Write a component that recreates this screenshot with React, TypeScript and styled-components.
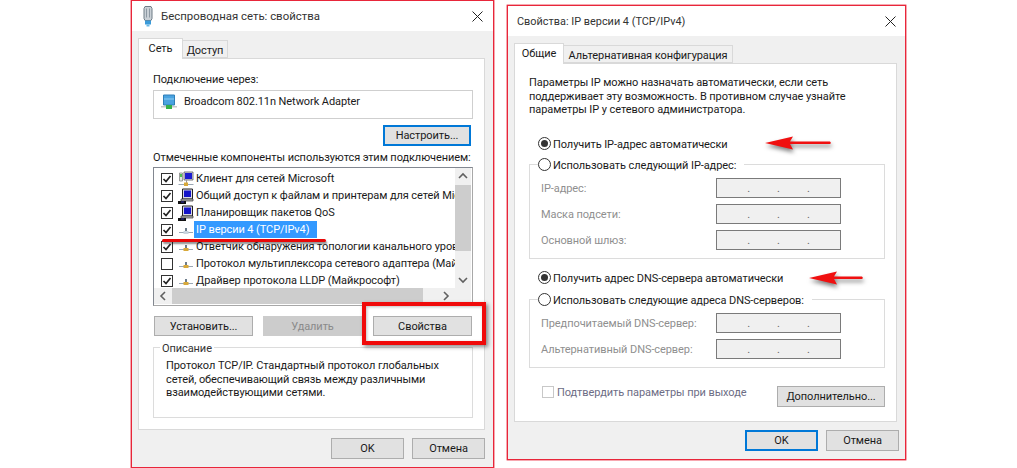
import React from "react";
import styled, { createGlobalStyle } from "styled-components";

const Global = createGlobalStyle`
  html, body { margin: 0; padding: 0; background: #fff; }
  body { font-family: Roboto, "Open Sans", "Liberation Sans", sans-serif; font-size: 11px; letter-spacing: -0.08px; color: #1a1a1a; }
  #root { width: 1017px; height: 468px; overflow: hidden; }
  * { box-sizing: border-box; }
`;

const Page = styled.div`
  position: relative;
  width: 1017px;
  height: 468px;
  display: flex;
  align-items: flex-start;
  padding-left: 131px;
  background: #fff;
  overflow: hidden;
`;

const Win = styled.section<{ $w: number; $h: number; $top: number; $left?: number }>`
  width: ${(p) => p.$w}px;
  height: ${(p) => p.$h}px;
  margin-top: ${(p) => p.$top}px;
  margin-left: ${(p) => p.$left ?? 0}px;
  display: flex;
  flex-direction: column;
  border: 1px solid #e8263a;
  box-shadow: 0 0 0 0.4px #e8263a;
  background: #f0f0f0;
`;

const TitleBar = styled.header<{ $pad: number; $right: number; $size: number }>`
  height: 30px;
  flex: none;
  display: flex;
  align-items: center;
  gap: 5px;
  padding: 0 ${(p) => p.$right}px 0 ${(p) => p.$pad}px;
  background: #fff;
  font-size: ${(p) => p.$size}px;
  letter-spacing: 0;
  color: #333;
  svg:last-child { margin-left: auto; }
`;

const Body = styled.div`
  flex: 1;
  display: flex;
  flex-direction: column;
  padding: 7px 8px 0 6px;
`;

const Tabs = styled.nav`
  height: 20px;
  flex: none;
  display: flex;
  align-items: flex-end;
  position: relative;
  z-index: 1;
`;

const Tab = styled.div<{ $active?: boolean; $w: number }>`
  width: ${(p) => p.$w}px;
  height: ${(p) => (p.$active ? 21 : 18)}px;
  margin-bottom: ${(p) => (p.$active ? -1 : 0)}px;
  display: flex;
  align-items: center;
  justify-content: center;
  white-space: nowrap;
  padding: ${(p) => (p.$active ? "0 0 1px" : "2px 0 0")};
  border: 1px solid #d9d9d9;
  border-bottom: ${(p) => (p.$active ? "none" : "1px solid #d9d9d9")};
  border-left: ${(p) => (p.$active ? "1px solid #d9d9d9" : "none")};
  background: ${(p) => (p.$active ? "#fff" : "#f0f0f0")};
`;

const TabPage = styled.div<{ $h: number; $pad: string }>`
  height: ${(p) => p.$h}px;
  flex: none;
  padding: ${(p) => p.$pad};
  display: flex;
  flex-direction: column;
  background: #fff;
  border: 1px solid #d9d9d9;
`;

const Footer = styled.footer<{ $top: number; $right: number }>`
  display: flex;
  justify-content: flex-end;
  gap: 8px;
  margin-top: ${(p) => p.$top}px;
  margin-right: ${(p) => p.$right}px;
`;

const Btn = styled.div<{ $w: number; $h?: number; $focus?: boolean; $disabled?: boolean; $top?: number; $left?: number }>`
  width: ${(p) => p.$w}px;
  height: ${(p) => p.$h ?? 21}px;
  flex: none;
  margin-top: ${(p) => p.$top ?? 0}px;
  margin-left: ${(p) => p.$left ?? 0}px;
  display: flex;
  align-items: center;
  justify-content: center;
  background: ${(p) => (p.$disabled ? "#cccccc" : "#e1e1e1")};
  color: ${(p) => (p.$disabled ? "#8a8a8a" : "#1a1a1a")};
  border: ${(p) => (p.$focus ? "2px solid #0078d7" : p.$disabled ? "1px solid #cccccc" : "1px solid #adadad")};
`;

const Caption = styled.div<{ $top?: number }>`
  height: 15px;
  line-height: 17px;
  margin-top: ${(p) => p.$top ?? 0}px;
  white-space: nowrap;
`;

const AdapterBox = styled.div`
  width: 320px;
  height: 29px;
  margin-top: 4px;
  display: flex;
  align-items: center;
  gap: 7px;
  padding: 0 0 6px 7px;
  border: 1px solid #cfcfcf;
`;

const RightAligned = styled.div`
  width: 318px;
  display: flex;
  justify-content: flex-end;
`;

const ListBox = styled.div`
  width: 320px;
  height: 139px;
  margin-top: 3px;
  display: grid;
  grid-template-columns: 301px 16px;
  grid-template-rows: 120px 16px;
  border: 1px solid #828790;
  border-right-color: #a8a8a8;
  border-bottom-color: #a8a8a8;
`;

const Rows = styled.ul`
  list-style: none;
  margin: 0;
  padding: 2px 0 0 7px;
  overflow: hidden;
  background: #fff;
`;

const Row = styled.li`
  height: 17px;
  display: flex;
  align-items: center;
  white-space: nowrap;
  svg.ico { width: 16px; height: 16px; margin-left: 5px; flex: none; }
`;

const RowText = styled.span<{ $sel?: boolean }>`
  height: 17px;
  line-height: 18px;
  padding: 0 8px 0 2px;
  background: ${(p) => (p.$sel ? "#3399ff" : "transparent")};
  color: ${(p) => (p.$sel ? "#fff" : "#1a1a1a")};
`;

const Box = styled.span<{ $dim?: boolean }>`
  width: 12px;
  height: 12px;
  flex: none;
  display: inline-flex;
  align-items: center;
  justify-content: center;
  background: #fff;
  border: 1px solid ${(p) => (p.$dim ? "#c8c8c8" : "#333")};
`;

const VTrack = styled.div`
  background: #f0f0f0;
  display: flex;
  flex-direction: column;
  justify-content: space-between;
  align-items: center;
`;

const HTrack = styled.div`
  background: #f0f0f0;
  display: flex;
  align-items: center;
`;

const Corner = styled.div`
  background: #f0f0f0;
`;

const VThumb = styled.div`
  width: 16px;
  height: 66px;
  background: #cdcdcd;
  margin-top: -20px;
`;

const HThumb = styled.div`
  width: 251px;
  height: 16px;
  background: #cdcdcd;
`;

const ArrowCell = styled.span<{ $end?: boolean }>`
  width: 18px;
  height: 16px;
  flex: none;
  display: flex;
  align-items: center;
  justify-content: center;
  margin-left: ${(p) => (p.$end ? "auto" : "0")};
`;

const ActionRow = styled.div`
  display: flex;
  margin-top: 10px;
  padding-left: 1px;
  gap: 10px;
`;

const Fieldset = styled.fieldset<{ $w: number; $h: number; $top: number }>`
  width: ${(p) => p.$w}px;
  height: ${(p) => p.$h}px;
  margin: ${(p) => p.$top}px 0 0;
  padding: 0;
  border: 1px solid #dcdcdc;
  min-width: 0;
`;

const Legend = styled.legend<{ $ml: number }>`
  margin-left: ${(p) => p.$ml}px;
  padding: 0 8px 0 0;
  height: 16px;
  display: flex;
  align-items: center;
  gap: 2px;
  line-height: 15px;
`;

const DescLegend = styled.legend`
  margin-left: 6px;
  padding: 0 2px;
  height: 15px;
  line-height: 17px;
  color: #333;
`;

const Desc = styled.p`
  margin: 4px 0 0 12px;
  line-height: 13.5px;
  color: #1a1a1a;
`;

const Intro = styled.p`
  margin: 0;
  line-height: 13.5px;
  white-space: nowrap;
`;

const Radio = styled.span<{ $on?: boolean }>`
  width: 13px;
  height: 13px;
  flex: none;
  border-radius: 50%;
  border: 1px solid #333;
  background: #fff;
  display: inline-flex;
  align-items: center;
  justify-content: center;
  &::after {
    content: "";
    width: 7px;
    height: 7px;
    border-radius: 50%;
    background: ${(p) => (p.$on ? "#333" : "transparent")};
  }
`;

const RadioRow = styled.div<{ $top: number }>`
  height: 16px;
  margin: ${(p) => p.$top}px 0 0 9px;
  display: flex;
  align-items: center;
  gap: 2px;
  white-space: nowrap;
`;

const RadioText = styled.span`
  padding-top: 2px;
`;

const FieldGrid = styled.div<{ $top: number }>`
  display: grid;
  grid-template-columns: 175px 125px;
  grid-auto-rows: 20px;
  row-gap: 6px;
  margin-top: ${(p) => p.$top}px;
  padding-left: 11px;
`;

const FieldLabel = styled.span`
  display: flex;
  align-items: center;
  padding-top: 2px;
  color: #8f8f8f;
  white-space: nowrap;
`;

const IpField = styled.span`
  display: flex;
  align-items: flex-end;
  justify-content: center;
  gap: 27px;
  padding-bottom: 1px;
  border: 1px solid #7a7a7a;
  background: #f0f0f0;
  color: #666;
  line-height: 14px;
`;

const ConfirmRow = styled.div`
  display: flex;
  align-items: flex-start;
  margin-top: 18px;
`;

const ConfirmLabel = styled.label`
  display: flex;
  align-items: center;
  gap: 3px;
  height: 13px;
  margin-left: 13px;
  width: 235px;
  color: #6d6d85;
  white-space: nowrap;
`;

const RedFrame = styled.div`
  position: absolute;
  left: 362px;
  top: 302px;
  width: 124px;
  height: 43px;
  border: 4px solid #f00a0a;
  box-shadow: 2px 2px 4px rgba(0, 0, 0, 0.45), inset 1px 1px 3px rgba(0, 0, 0, 0.25);
`;

const RedLine = styled.div`
  position: absolute;
  left: 162px;
  top: 239px;
  width: 164px;
  height: 3px;
  border-radius: 2px;
  background: #e80808;
  box-shadow: 1px 2px 2px rgba(0, 0, 0, 0.45);
`;

const ArrowMark = styled.svg<{ $x: number; $y: number }>`
  position: absolute;
  left: ${(p) => p.$x}px;
  top: ${(p) => p.$y}px;
  overflow: visible;
  filter: drop-shadow(1px 3px 2px rgba(0, 0, 0, 0.5));
`;

const Close = () => (
  <svg width="11" height="11" viewBox="0 0 11 11">
    <path d="M0.5 0.5 10.5 10.5M10.5 0.5 0.5 10.5" stroke="#222" strokeWidth="1" fill="none" />
  </svg>
);

const Check = () => (
  <svg width="10" height="10" viewBox="0 0 10 10">
    <path d="M1.5 5 4 7.5 8.5 2" stroke="#222" strokeWidth="1.7" fill="none" />
  </svg>
);

const WifiIcon = () => (
  <svg width="16" height="22" viewBox="0 0 16 22">
    <path d="M5 1.500h6l1 2v10l-1 2H5l-1-2v-10z" fill="#c9d0d6" stroke="#6f7c86" />
    <path d="M6.500 3.500v9M9.500 3.500v9" stroke="#8d99a3" />
    <path d="M5 15.500h6v4H5z" fill="#3a9ad9" />
    <path d="M6.500 19.500h3v2h-3z" fill="#66b6e6" />
  </svg>
);

const AdapterIcon = () => (
  <svg width="16" height="16" viewBox="0 0 16 16" style={{ flex: "none" }}>
    <path d="M2.500 1h11v10h-11z" fill="#4aa3e0" stroke="#2f7fb8" />
    <path d="M3 5h10" stroke="#8fcdf2" />
    <path d="M0 12h16v1.500H0z" fill="#c9c9c9" />
    <path d="M5 11h6v4H5z" fill="#35b04a" />
  </svg>
);

const PcIcon = () => (
  <svg className="ico" viewBox="0 0 16 16">
    <path d="M4.500 1h10v10h-10z" fill="#d8d8e4" stroke="#222" />
    <path d="M6 2.500h7v6.500H6z" fill="#1414c8" />
    <path d="M3 11h12v2H3z" fill="#b5b5b5" stroke="#333" strokeWidth=".7" />
    <path d="M0 13h8v3H0z" fill="#111" />
    <path d="M3 14h3" stroke="#33a" />
  </svg>
);

const ClientIcon = () => (
  <svg className="ico" viewBox="0 0 16 16">
    <path d="M1.500 2h3v8h-3z" fill="#dfe7df" stroke="#777" strokeWidth=".7" />
    <path d="M2 3h2v3H2z" fill="#4fc04f" />
    <path d="M6 1h9v8H6z" fill="#dde" stroke="#444" strokeWidth=".7" />
    <path d="M7 2h7v6H7z" fill="#1c1cd0" />
    <path d="M8 9h1v3H8z" fill="#999" />
    <path d="M0.500 13.500h15" stroke="#9aa7b4" />
    <path d="M6 11.500h4v3.500H6z" fill="#d8a93a" />
  </svg>
);

const ProtoIcon = ({ blue }: { blue?: boolean }) => (
  <svg className="ico" viewBox="0 0 16 16">
    <path d="M1 10.500h14" stroke="#9aa7b4" />
    <path d="M7 6h2v3H7z" fill="#6e7d8c" />
    <path d="M5.500 9h5v3h-5z" fill={blue ? "#c9d4de" : "#d8a93a"} />
  </svg>
);

const Chevron = ({ d }: { d: string }) => (
  <svg width="10" height="10" viewBox="0 0 10 10">
    <path d={d} stroke="#606060" strokeWidth="1.6" fill="none" />
  </svg>
);

const RedArrow = ({ x, y, w }: { x: number; y: number; w: number }) => (
  <ArrowMark $x={x} $y={y} width={w} height="14" viewBox={`0 0 ${w} 14`}>
    <path d={`M0 7 28 0.500 25 5.500 ${w - 1} 5.500 ${w} 7 ${w - 1} 8 25 8 28 13.500z`} fill="#f01010" />
  </ArrowMark>
);

const IpDots = () => (
  <IpField>
    <span>.</span>
    <span>.</span>
    <span>.</span>
  </IpField>
);

const rows: { text: string; on: boolean; icon: React.ReactNode; sel?: boolean }[] = [
  { text: "Клиент для сетей Microsoft", on: true, icon: <ClientIcon /> },
  { text: "Общий доступ к файлам и принтерам для сетей Microsoft", on: true, icon: <PcIcon /> },
  { text: "Планировщик пакетов QoS", on: true, icon: <PcIcon /> },
  { text: "IP версии 4 (TCP/IPv4)", on: true, icon: <ProtoIcon blue />, sel: true },
  { text: "Ответчик обнаружения топологии канального уровня", on: true, icon: <ProtoIcon /> },
  { text: "Протокол мультиплексора сетевого адаптера (Майкрософт)", on: false, icon: <ProtoIcon /> },
  { text: "Драйвер протокола LLDP (Майкрософт)", on: true, icon: <ProtoIcon /> },
];

export default function App() {
  return (
    <Page>
      <Global />
      <Win $w={363} $h={468} $top={0}>
        <TitleBar $pad={8} $right={10} $size={11.4}>
          <WifiIcon />
          <span>Беспроводная сеть: свойства</span>
          <Close />
        </TitleBar>
        <Body>
          <Tabs>
            <Tab $active $w={45}>Сеть</Tab>
            <Tab $w={45}>Доступ</Tab>
          </Tabs>
          <TabPage $h={372} $pad="12px 11px 0 14px">
            <Caption>Подключение через:</Caption>
            <AdapterBox>
              <AdapterIcon />
              <span>Broadcom 802.11n Network Adapter</span>
            </AdapterBox>
            <RightAligned>
              <Btn $w={88} $top={6} $focus>Настроить...</Btn>
            </RightAligned>
            <Caption $top={3}>Отмеченные компоненты используются этим подключением:</Caption>
            <ListBox>
              <Rows>
                {rows.map((r) => (
                  <Row key={r.text}>
                    <Box>{r.on && <Check />}</Box>
                    {r.icon}
                    <RowText $sel={r.sel}>{r.text}</RowText>
                  </Row>
                ))}
              </Rows>
              <VTrack>
                <ArrowCell><Chevron d="M1 7 5 3 9 7" /></ArrowCell>
                <VThumb />
                <ArrowCell><Chevron d="M1 3 5 7 9 3" /></ArrowCell>
              </VTrack>
              <HTrack>
                <ArrowCell><Chevron d="M7 1 3 5 7 9" /></ArrowCell>
                <HThumb />
                <ArrowCell $end><Chevron d="M3 1 7 5 3 9" /></ArrowCell>
              </HTrack>
              <Corner />
            </ListBox>
            <ActionRow>
              <Btn $w={99} $h={20}>Установить...</Btn>
              <Btn $w={99} $h={20} $disabled>Удалить</Btn>
              <Btn $w={99} $h={20} $left={1}>Свойства</Btn>
            </ActionRow>
            <Fieldset $w={320} $h={78} $top={4}>
              <DescLegend>Описание</DescLegend>
              <Desc>
                Протокол TCP/IP. Стандартный протокол глобальных<br />
                сетей, обеспечивающий связь между различными<br />
                взаимодействующими сетями.
              </Desc>
            </Fieldset>
          </TabPage>
          <Footer $top={8} $right={0}>
            <Btn $w={73}>OK</Btn>
            <Btn $w={73}>Отмена</Btn>
          </Footer>
        </Body>
      </Win>

      <Win $w={399} $h={455} $top={5} $left={13}>
        <TitleBar $pad={9} $right={9} $size={10.9}>
          <span>Свойства: IP версии 4 (TCP/IPv4)</span>
          <Close />
        </TitleBar>
        <Body>
          <Tabs>
            <Tab $active $w={50}>Общие</Tab>
            <Tab $w={169}>Альтернативная конфигурация</Tab>
          </Tabs>
          <TabPage $h={359} $pad="12px 11px 0 14px">
            <Intro>
              Параметры IP можно назначать автоматически, если сеть<br />
              поддерживает эту возможность. В противном случае узнайте<br />
              параметры IP у сетевого администратора.
            </Intro>
            <RadioRow $top={19}><Radio $on /><RadioText>Получить IP-адрес автоматически</RadioText></RadioRow>
            <Fieldset $w={356} $h={102} $top={5}>
              <Legend $ml={8}><Radio /><RadioText>Использовать следующий IP-адрес:</RadioText></Legend>
              <FieldGrid $top={5}>
                <FieldLabel>IP-адрес:</FieldLabel><IpDots />
                <FieldLabel>Маска подсети:</FieldLabel><IpDots />
                <FieldLabel>Основной шлюз:</FieldLabel><IpDots />
              </FieldGrid>
            </Fieldset>
            <RadioRow $top={11}><Radio $on /><RadioText>Получить адрес DNS-сервера автоматически</RadioText></RadioRow>
            <Fieldset $w={356} $h={76} $top={6}>
              <Legend $ml={8}><Radio /><RadioText>Использовать следующие адреса DNS-серверов:</RadioText></Legend>
              <FieldGrid $top={5}>
                <FieldLabel>Предпочитаемый DNS-сервер:</FieldLabel><IpDots />
                <FieldLabel>Альтернативный DNS-сервер:</FieldLabel><IpDots />
              </FieldGrid>
            </Fieldset>
            <ConfirmRow>
              <ConfirmLabel><Box $dim />Подтвердить параметры при выходе</ConfirmLabel>
              <Btn $w={108}>Дополнительно...</Btn>
            </ConfirmRow>
          </TabPage>
          <Footer $top={8} $right={-2}>
            <Btn $w={73} $focus>OK</Btn>
            <Btn $w={73}>Отмена</Btn>
          </Footer>
        </Body>
      </Win>

      <RedLine />
      <RedFrame />
      <RedArrow x={765} y={136} w={66} />
      <RedArrow x={809} y={271} w={54} />
    </Page>
  );
}
